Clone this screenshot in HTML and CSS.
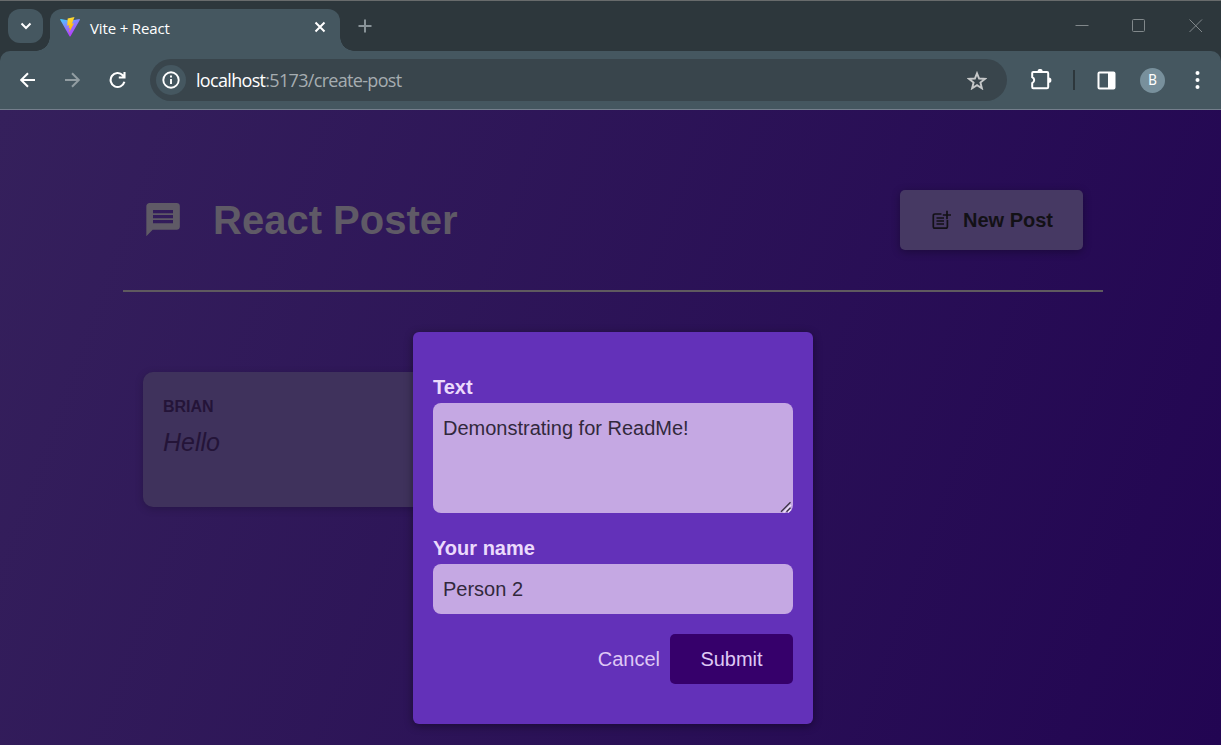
FILE: index.html
```html
<!DOCTYPE html>
<html lang="en">
<head>
<meta charset="utf-8">
<title>Vite + React</title>
<link rel="stylesheet" href="styles.css">
</head>
<body>
<div class="browser">
  <div class="tabstrip">
    <div class="tab-search">
      <svg width="12" height="8" viewBox="0 0 12 8"><path d="M1.500 1.500 6 6l4.500-4.500" fill="none" stroke="#fff" stroke-width="2"/></svg>
    </div>
    <div class="tab">
      <svg class="favicon" width="20" height="20" viewBox="0 0 20 20">
        <defs>
          <linearGradient id="tri" x1="0" y1="0" x2=".55" y2="1"><stop offset="0" stop-color="#41d1ff"/><stop offset=".5" stop-color="#8a7cff"/><stop offset="1" stop-color="#bd34fe"/></linearGradient>
          <linearGradient id="bolt" x1=".4" y1="0" x2=".6" y2="1"><stop offset="0" stop-color="#ffdd35"/><stop offset="1" stop-color="#ffa800"/></linearGradient>
        </defs>
        <path d="M.6 2 10.200 3.800 19.400 2q.8 0 .4.900L10.500 19.200q-.5.800-1 0L.2 2.800Q0 2 .6 2z" fill="url(#tri)"/>
        <path d="M14.500.1 7.700 1.400 7.200 8.700 9.200 8.300 8.600 11.200 10 10.800 9 15.700 14 6.300 11.900 6.700z" fill="url(#bolt)"/>
      </svg>
      <span class="tab-title">Vite + React</span>
      <svg class="tab-close" width="12" height="12" viewBox="0 0 12 12"><path d="m1.500 1.500 9 9m0-9-9 9" stroke="#fff" stroke-width="2"/></svg>
    </div>
    <svg class="tab-add" width="14" height="14" viewBox="0 0 14 14"><path d="M7 .5v13M.5 7h13" stroke="#899398" stroke-width="2"/></svg>
    <div class="window-controls">
      <svg width="14" height="14" viewBox="0 0 14 14"><path d="M.5 6.500h13" stroke="#81888b"/></svg>
      <svg width="14" height="14" viewBox="0 0 14 14"><rect x=".5" y=".5" width="12" height="12" rx="1" fill="none" stroke="#81888b"/></svg>
      <svg width="14" height="14" viewBox="0 0 14 14"><path d="m.5.500 12.500 12.500m0-12.500-12.500 12.500" stroke="#81888b"/></svg>
    </div>
  </div>
  <div class="toolbar">
    <svg class="nav-back" width="16" height="16" viewBox="0 0 16 16"><path d="M15 8H2M8 1.200 1.200 8 8 14.800" fill="none" stroke="#fff" stroke-width="2"/></svg>
    <svg class="nav-forward" width="16" height="16" viewBox="0 0 16 16"><path d="M0 8H13.500M7 1.200 13.800 8 7 14.800" fill="none" stroke="#929da2" stroke-width="2"/></svg>
    <svg class="nav-reload" width="18" height="18" viewBox="0 0 18 18"><path d="M15.400 10.800A7 7 0 1 1 13.700 4.200L15.300 6M15.500 .900V6.500H9.800" fill="none" stroke="#fff" stroke-width="2.100"/></svg>
    <div class="omnibox">
      <span class="site-info">
        <svg width="18" height="18" viewBox="0 0 18 18"><circle cx="9" cy="9" r="7.700" fill="none" stroke="#fff" stroke-width="1.900"/><path d="M9 8v5M9 4.600v2" stroke="#fff" stroke-width="1.900"/></svg>
      </span>
      <span class="url"><b>localhost</b>:5173/create-post</span>
      <svg class="star" width="20" height="19" viewBox="0 0 20 19"><path d="m10 2.300 2.100 5.200 5.800.400-4.500 3.700 1.500 5.700L10 14.200l-4.900 3.100 1.500-5.700-4.500-3.700 5.800-.400z" fill="none" stroke="#c6c8c9" stroke-width="1.900"/></svg>
    </div>
    <svg class="extensions" width="22" height="22" viewBox="0 0 22 22"><path d="M2.200 4Q2.200 3 3.200 3H17q1.200 0 1.200 1.200V18q0 1.200-1.200 1.200H3.200Q2.200 19.200 2.200 18v-3.900q2-1 2-3t-2-3z" fill="none" stroke="#fff" stroke-width="2"/><path d="M7.500 2.500a2.600 2.600 0 0 1 5.200 0zM18.800 8.600a2.600 2.600 0 0 1 0 5.200z" fill="#fff"/></svg>
    <span class="divider"></span>
    <svg class="side-panel" width="19" height="19" viewBox="0 0 19 19"><rect x="1.500" y="1.500" width="16" height="16" rx="1" fill="none" stroke="#fff" stroke-width="2"/><path d="M11 1h7v17h-7z" fill="#fff"/></svg>
    <span class="avatar">B</span>
    <svg class="menu" width="5" height="18" viewBox="0 0 5 18"><g fill="#fff"><circle cx="2.500" cy="2" r="2"/><circle cx="2.500" cy="9" r="2"/><circle cx="2.500" cy="16" r="2"/></g></svg>
  </div>
</div>

<div class="page">
  <header class="header">
    <h1 class="logo">
      <svg width="40" height="40" viewBox="0 0 24 24"><path fill-rule="evenodd" d="M4 1.800H20.200c1.100 0 1.900.800 1.900 1.800V16.100c0 1-.800 1.800-1.900 1.800H5.800L2 21.700V3.800c0-1.200.800-2 2-2zM6 6v2h12V6zM6 9v2h12V9zM6 12v2h12V12z" fill="#5f5a66"/></svg>
      React Poster
    </h1>
    <button class="new-post">
      <svg width="20" height="20" viewBox="0 0 20 20"><path d="M10.500 4H4Q2.300 4 2.300 5.700V16.500Q2.300 18.200 4 18.200H14.700Q16.400 18.200 16.400 16.500V10" fill="none" stroke="#131116" stroke-width="1.700"/><path d="M16 .800V9.200M11.800 5H20M5.500 8h7.500M5.500 11h7.500M5.500 14h7.500" stroke="#131116" stroke-width="1.700"/></svg>
      New Post
    </button>
  </header>
  <main class="posts">
    <article class="post">
      <p class="author">Brian</p>
      <p class="text">Hello</p>
    </article>
  </main>
  <form class="modal">
    <label class="label" for="body">Text</label>
    <div class="area-wrap">
      <textarea class="field area" id="body">Demonstrating for ReadMe!</textarea>
      <svg class="grip" width="12" height="12" viewBox="0 0 12 12"><path d="M3.500 11.500 11 4M8 11.500 11 8.500" stroke="#eee4f7" stroke-width="1.500"/><path d="M1 10.800 10.500 1.300M6.500 10.800 10.500 6.800" stroke="#3a3342" stroke-width="1.300"/></svg>
    </div>
    <label class="label second" for="name">Your name</label>
    <input class="field" id="name" type="text" value="Person 2">
    <div class="actions">
      <button class="cancel" type="button">Cancel</button>
      <button class="submit" type="button">Submit</button>
    </div>
  </form>
</div>
</body>
</html>
```

FILE: styles.css
```css
* { box-sizing: border-box; }

body {
  margin: 0;
  height: 745px;
  overflow: hidden;
  display: flex;
  flex-direction: column;
  font-family: "Liberation Sans", Arial, sans-serif;
}

svg { display: block; flex: none; }

button { border: 0; font: inherit; }

/* Browser chrome */
.browser {
  flex: none;
  height: 110px;
  background: #2d373c;
  border-top: 1px solid #686b6c;
  border-bottom: 1px solid #747e8c;
  font-family: "Open Sans", "Noto Sans", sans-serif;
}

.tabstrip {
  display: flex;
  height: 50px;
  padding: 8px 0 0 8px;
}

.tab-search {
  display: grid;
  place-items: center;
  width: 35px;
  height: 34px;
  border-radius: 12px;
  background: #455760;
}

.tab {
  position: relative;
  display: flex;
  align-items: center;
  width: 290px;
  height: 42px;
  margin-left: 7px;
  padding: 0 14px 7px 10px;
  border-radius: 12px 12px 0 0;
  background: #455760;
}

.tab::before,
.tab::after {
  content: "";
  position: absolute;
  bottom: 0;
  width: 14px;
  height: 14px;
}

.tab::before {
  left: -14px;
  background: radial-gradient(circle at 0 0, transparent 13.500px, #455760 14px);
}

.tab::after {
  right: -14px;
  background: radial-gradient(circle at 100% 0, transparent 13.500px, #455760 14px);
}

.tab-title {
  margin-left: 10px;
  padding-top: 2px;
  flex: 1;
  color: #fff;
  font-size: 15px;
  letter-spacing: -0.150px;
  line-height: 20px;
}

.tab-add { margin: 10px 0 0 18px; }

.window-controls {
  display: flex;
  gap: 43px;
  margin: 10px 18px 0 auto;
}

.toolbar {
  display: flex;
  align-items: center;
  height: 58px;
  padding: 0 21px 0 20px;
  border-radius: 10px 10px 0 0;
  background: #455760;
}

.nav-forward { margin-left: 29px; }
.nav-reload { margin-left: 28px; }

.omnibox {
  display: flex;
  align-items: center;
  width: 857px;
  height: 42px;
  margin-left: 23px;
  padding: 0 20px 0 6px;
  border-radius: 21px;
  background: #39454c;
}

.site-info {
  display: grid;
  place-items: center;
  width: 30px;
  height: 30px;
  border-radius: 50%;
  background: #455760;
}

.url {
  flex: 1;
  margin-left: 10px;
  color: #a6adb1;
  font-size: 18px;
  letter-spacing: -0.680px;
}

.url b { color: #fff; font-weight: 400; }

.extensions { margin-left: 23px; }

.divider {
  width: 2px;
  height: 20px;
  margin-left: 21px;
  background: #2d373c;
}

.side-panel { margin-left: 22px; }

.avatar {
  display: grid;
  place-items: center;
  width: 25px;
  height: 25px;
  margin-left: 24px;
  border-radius: 50%;
  background: #78909c;
  color: #fff;
  font: 400 14px Roboto, sans-serif;
}

.menu { margin-left: 30px; }

/* Application */
.page {
  position: relative;
  flex: 1;
  padding: 40px 118px 0 123px;
  background: linear-gradient(110deg, #35205c, #220552);
}

.header {
  display: flex;
  align-items: center;
  justify-content: space-between;
  height: 142px;
  padding: 0 20px;
  border-bottom: 2px solid #5f5a5f;
}

.logo {
  display: flex;
  align-items: center;
  gap: 30px;
  margin: 0;
  color: #5f5a66;
  font-size: 40px;
  line-height: 46px;
}

.new-post {
  display: flex;
  align-items: center;
  gap: 12px;
  height: 60px;
  padding: 0 30px 0 31px;
  border-radius: 5px;
  background: #463963;
  box-shadow: 0 2px 8px rgba(0, 0, 0, .3);
  color: #131116;
  font-size: 20px;
  font-weight: 700;
}

.posts {
  display: grid;
  grid-template-columns: repeat(2, 460px);
  padding: 80px 20px 0;
}

.post {
  height: 135px;
  padding: 25px 20px;
  border-radius: 10px;
  background: #3f325c;
  box-shadow: 0 2px 8px rgba(0, 0, 0, .2);
  color: #241438;
}

.author {
  margin: 0;
  font-size: 16px;
  font-weight: 700;
  line-height: 20px;
  text-transform: uppercase;
}

.text {
  margin: 10px 0 0;
  font-size: 25px;
  font-style: italic;
  line-height: 30px;
}

/* Dialog over the posts */
.modal {
  position: absolute;
  top: 222px;
  left: 413px;
  display: flex;
  flex-direction: column;
  width: 400px;
  height: 392px;
  padding: 43px 20px 40px;
  border-radius: 6px;
  background: #6331b9;
  box-shadow: 0 2px 8px rgba(0, 0, 0, .4);
  font-size: 20px;
}

.label {
  height: 28px;
  color: #ebdafc;
  font-weight: 700;
  line-height: 25px;
}

.second { margin-top: 23px; }

.field {
  display: block;
  width: 360px;
  height: 50px;
  margin: 0;
  padding: 10px;
  border: 0;
  border-radius: 8px;
  outline: 0;
  background: #c5a8e3;
  color: #32283c;
  font: 20px "Liberation Sans", Arial, sans-serif;
}

.area-wrap { position: relative; }

.area {
  height: 110px;
  padding-top: 14px;
  resize: none;
}

.grip {
  position: absolute;
  right: 1px;
  bottom: 0;
}

.actions {
  display: flex;
  justify-content: flex-end;
  gap: 10px;
  margin-top: 20px;
}

.cancel {
  padding: 0;
  background: none;
  color: #dfc8f5;
}

.submit {
  width: 123px;
  height: 50px;
  border-radius: 5px;
  background: #36006b;
  color: #dfc8f5;
}
```
